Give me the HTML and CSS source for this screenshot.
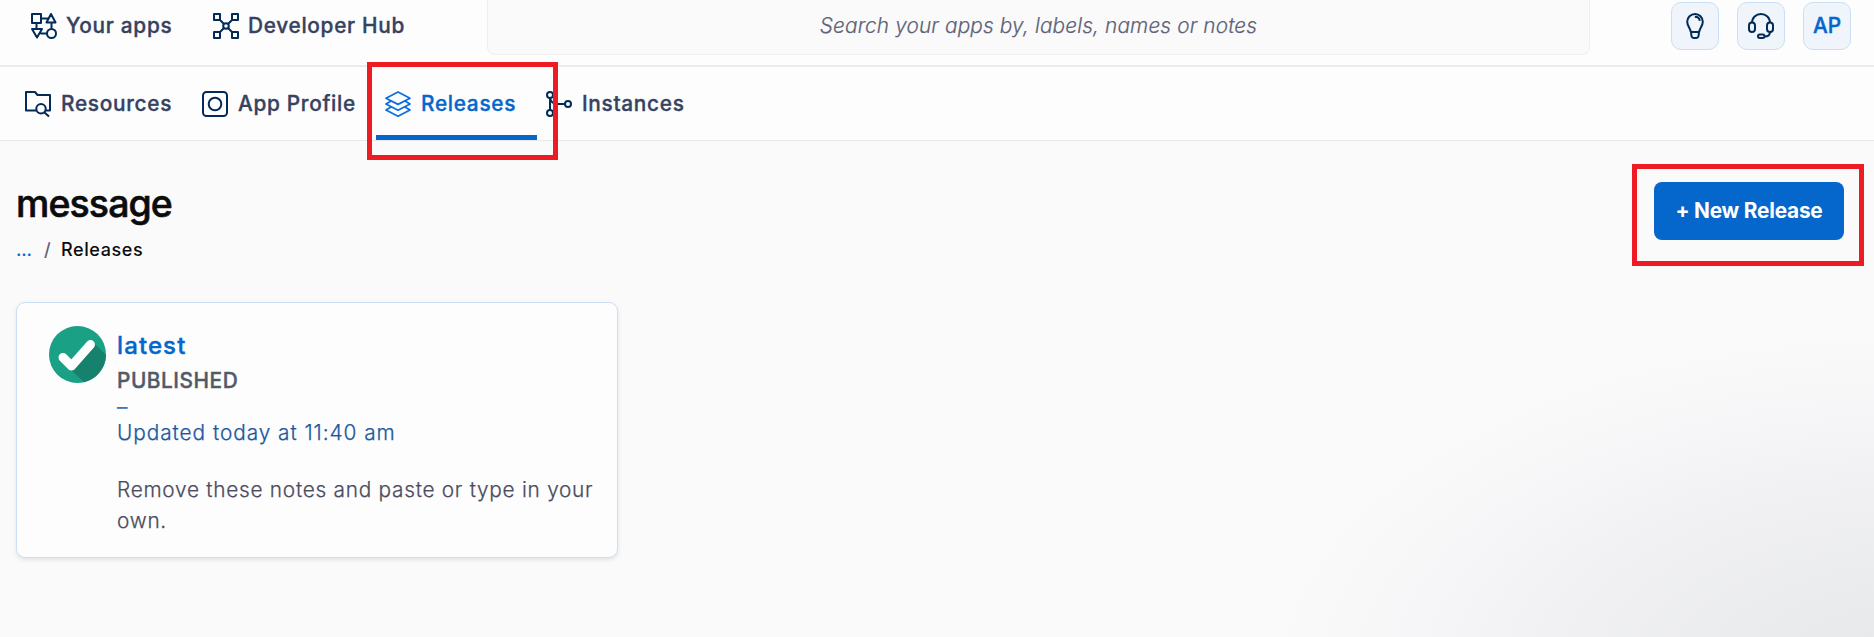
FILE: index.html
```html
<!DOCTYPE html>
<html lang="en">
<head>
<meta charset="utf-8">
<title>message - Releases</title>
<link rel="stylesheet" href="styles.css">
</head>
<body>
<header class="topbar">
  <a class="nav-link nav-apps">
    <svg class="icon" viewBox="0 0 26 26"><path d="M1 1h9v9H1zM20 1l4.500 8.500h-9zM1 16h10L6 24.500zM10 5.500h7.500M5.500 10v6M20.500 9.500v6M9.500 20.500H16"/><circle cx="20.500" cy="20.500" r="4.500"/></svg>
    <span>Your apps</span>
  </a>
  <a class="nav-link nav-hub">
    <svg class="icon" viewBox="0 0 26 26"><path d="M1 1h6v6H1zM19 1h6v6h-6zM1 19h6v6H1zM19 19h6v6h-6zM7 7l4 4M19 7l-4 4M7 19l4-4M19 19l-4-4"/><circle cx="13" cy="13" r="2.800"/></svg>
    <span>Developer Hub</span>
  </a>
  <div class="search">Search your apps by, labels, names or notes</div>
  <div class="actions">
    <button class="square"><svg class="icon" viewBox="0 0 26 26"><path d="M8.800 19C8.500 15.500 5.200 13 5.200 8.800a7.800 7.800 0 0 1 15.600 0C20.800 13 17.500 15.500 17.200 19zM9 19l.4 3.500Q9.700 25 12 25h2q2.300 0 2.600-2.500L17 19M12.800 3.800c3 0 4.700 1.700 5 4"/></svg></button>
    <button class="square"><svg class="icon" viewBox="0 0 26 26"><path d="M4 10C4 4.500 8 1 13 1s9 3.500 9 9M22 19c0 3-2 4.500-5.500 4.500"/><rect x="1" y="9.500" width="6" height="9.500" rx="3"/><rect x="19" y="9.500" width="6" height="9.500" rx="3"/><rect x="10" y="21.500" width="6.500" height="3.500" rx="1.700"/></svg></button>
    <button class="square initials">AP</button>
  </div>
</header>
<nav class="tabs">
  <a class="tab tab-resources">
    <svg class="icon" viewBox="0 0 26 26"><path d="M11 19.500H1V1h9l2.500 3H25v15.500h-4.500M19.500 21.500l4.500 4"/><circle cx="16" cy="17.700" r="4.700"/></svg>
    <span>Resources</span>
  </a>
  <a class="tab tab-profile">
    <svg class="icon" viewBox="0 0 26 26"><rect x="1" y="1" width="24" height="24" rx="3.500"/><circle cx="13" cy="13" r="6.300"/></svg>
    <span>App Profile</span>
  </a>
  <a class="tab tab-releases">
    <svg class="icon thin" viewBox="0 0 26 26"><path d="M13 1l12 6.200-12 6.200L1 7.200zM6 10l-5 3 12 6.200L25 13l-5-3M6 16l-5 3 12 6.200L25 19l-5-3"/></svg>
    <span>Releases</span>
  </a>
  <a class="tab tab-instances">
    <svg class="icon" viewBox="0 0 26 26"><circle cx="4" cy="4" r="3"/><circle cx="4" cy="22" r="3"/><circle cx="22" cy="13" r="3"/><path d="M4 7v12M4 7q1 6 8 6h7"/></svg>
    <span>Instances</span>
  </a>
  <div class="marker marker-tab"></div>
</nav>
<main class="page">
  <div class="page-head">
    <div>
      <h1>message</h1>
      <div class="crumbs"><a>...</a><span class="slash">/</span><span>Releases</span></div>
    </div>
    <div class="cta">
      <button class="new-release">+ New Release</button>
      <div class="marker marker-cta"></div>
    </div>
  </div>
  <article class="card">
    <svg class="badge" viewBox="0 0 57 57">
      <circle cx="28.500" cy="28.500" r="28.500" fill="#1aa085"/>
      <path d="M45 17L57 29A28.500 28.500 0 0 1 35 56.200L20 42z" fill="#16826d"/>
      <path d="M14 31.500l8.500 8.500L41.500 18.500" fill="none" stroke="#fff" stroke-width="9" stroke-linecap="round" stroke-linejoin="round"/>
    </svg>
    <div class="card-body">
      <h2>latest</h2>
      <div class="status">PUBLISHED</div>
      <div class="dash">–</div>
      <div class="updated">Updated today at 11:40 am</div>
      <p class="notes">Remove these notes and paste or type in your own.</p>
    </div>
  </article>
</main>
</body>
</html>
```

FILE: styles.css
```css
* { box-sizing: border-box; }
body {
  margin: 0;
  height: 637px;
  overflow: hidden;
  display: flex;
  flex-direction: column;
  background: #fafafa;
  font-family: Inter, "Liberation Sans", sans-serif;
  font-size: 20.8px;
}
h1, h2, p { margin: 0; }
.icon {
  width: 26px;
  height: 26px;
  flex: none;
  display: block;
  overflow: visible;
  fill: none;
  stroke: #022b57;
  stroke-width: 2;
  stroke-linejoin: round;
}
.icon.thin { stroke: #0a70df; stroke-width: 1.8; }
.topbar {
  height: 67px;
  flex: none;
  display: flex;
  align-items: flex-start;
  padding: 0 23px 0 31px;
  background: #fdfdfd;
  border-bottom: 2px solid #ebebeb;
}
.nav-link, .tab {
  display: flex;
  align-items: center;
  gap: 10px;
  color: #36425f;
  font-weight: 500;
  letter-spacing: .7px;
  white-space: nowrap;
  -webkit-text-stroke: .35px currentColor;
}
.nav-link { height: 51px; gap: 9px; }
.nav-apps { width: 182px; }
.nav-hub { width: 274px; }
.search {
  width: 1103px;
  height: 55px;
  padding-bottom: 3px;
  display: flex;
  align-items: center;
  justify-content: center;
  background: #fafafa;
  border: 1px solid #efefef;
  border-top: 0;
  border-radius: 0 0 8px 8px;
  color: #5d6378;
  font-style: italic;
  font-weight: 300;
  letter-spacing: .14px;
  -webkit-text-stroke: .2px currentColor;
}
.actions { display: flex; gap: 18px; margin: 1.500px 0 0 auto; }
.square {
  width: 48px;
  height: 48px;
  padding: 0;
  display: flex;
  align-items: center;
  justify-content: center;
  background: #eff5fa;
  border: 1px solid #cbdff5;
  border-radius: 10px;
}
.initials {
  padding-bottom: 1px;
  color: #0566cc;
  font: 500 20.8px Inter, sans-serif;
  -webkit-text-stroke: .4px currentColor;
}
.tabs {
  position: relative;
  height: 74px;
  flex: none;
  display: flex;
  padding-left: 25px;
  background: #fdfdfd;
  border-bottom: 1px solid #e8e8e8;
}
.tab { height: 73px; }
.tab-resources { width: 177px; }
.tab-profile { width: 174px; }
.tab-releases {
  width: 161px;
  padding: 5px 0 0 9px;
  color: #0566cc;
  border-bottom: 5px solid #0566cc;
}
.tab-instances { margin-left: 9px; }
.marker { position: absolute; border: 5px solid #ed1c24; }
.marker-tab { left: 367px; top: -5px; width: 191px; height: 98px; z-index: 2; }
.page {
  flex: 1;
  padding: 41px 30px 0 16px;
  background: radial-gradient(ellipse 650px 350px at 1915px 540px, #e6e7e9 0%, #eaebed 25%, #f1f1f3 58%, #f6f6f8 78%, #fafafa 100%) #fafafa;
}
.page-head { display: flex; justify-content: space-between; height: 120px; }
h1 {
  color: #0b0c0e;
  font-size: 37.5px;
  font-weight: 500;
  line-height: 44px;
  letter-spacing: -.9px;
  -webkit-text-stroke: .6px currentColor;
}
.crumbs {
  display: flex;
  margin-top: 13px;
  font-size: 18px;
  font-weight: 500;
  line-height: 22px;
  letter-spacing: .6px;
  color: #0b0c0e;
}
.crumbs a { width: 28px; color: #0566cc; letter-spacing: -.2px; }
.crumbs .slash { width: 17px; color: #5d6378; }
.cta { position: relative; }
.new-release {
  width: 190px;
  height: 58px;
  display: block;
  padding: 0 0 2px;
  border: 0;
  border-radius: 8px;
  background: #0566cc;
  color: #fff;
  font: 700 20.8px Inter, sans-serif;
  letter-spacing: -.2px;
}
.marker-cta { left: -22px; top: -18px; width: 232px; height: 102px; }
.card {
  display: flex;
  gap: 11px;
  width: 602px;
  height: 256px;
  padding: 23px 16px 0 32px;
  background: #fdfdfd;
  border: 1px solid #ccdff5;
  border-radius: 9px;
  box-shadow: 0 2px 4px rgba(60, 80, 110, .13);
}
.badge { width: 57px; height: 57px; flex: none; }
.card-body {
  font-weight: 300;
  letter-spacing: .74px;
  -webkit-text-stroke: .25px currentColor;
}
h2 {
  padding-top: 4px;
  color: #0566cc;
  font-size: 24px;
  font-weight: 500;
  line-height: 32px;
  letter-spacing: 1.1px;
  -webkit-text-stroke: .4px currentColor;
}
.status {
  margin-top: 3px;
  color: #505a69;
  font-weight: 500;
  line-height: 32px;
  letter-spacing: .55px;
  -webkit-text-stroke: .4px currentColor;
}
.dash { font-weight: 400; color: #3a77bd; font-size: 20.8px; line-height: 19px; padding-bottom: 1px; }
.updated { color: #1c58a0; line-height: 32px; letter-spacing: .96px; }
.notes { margin-top: 25px; color: #4b4c5e; line-height: 31px; }
```
